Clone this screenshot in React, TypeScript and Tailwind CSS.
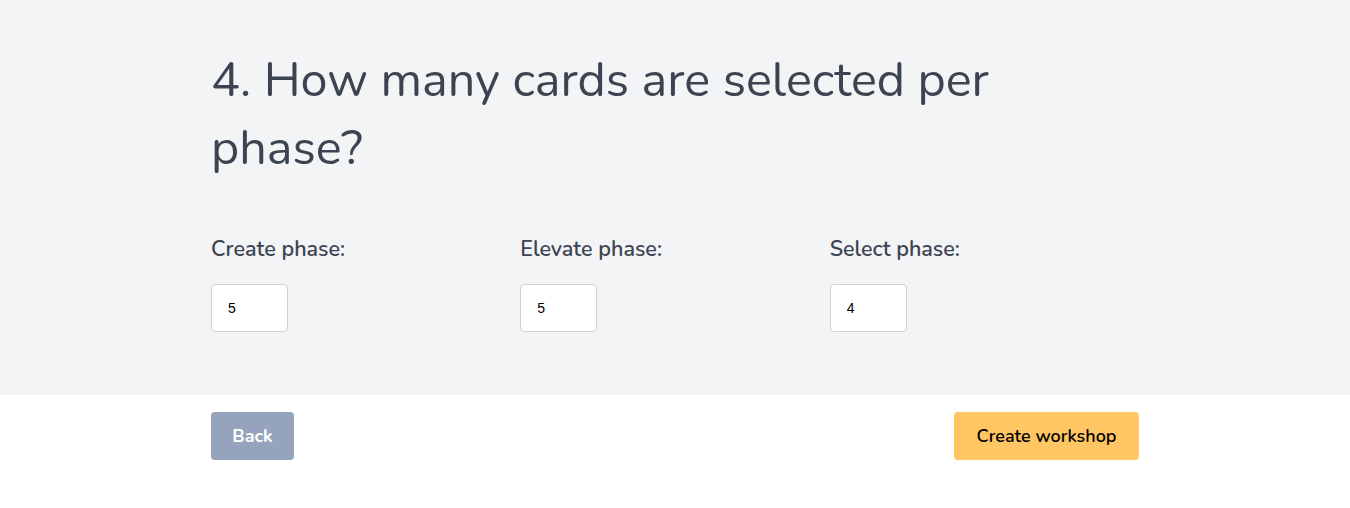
import * as React from "react";

const font = { fontFamily: "Nunito, Lato, 'Noto Sans', sans-serif" };

interface PhaseInputProps {
    label: string;
    value: string;
}

const PhaseInput = ({ label, value }: PhaseInputProps) => (
    <div className="flex flex-col">
        <label className="text-[21.5px] font-semibold leading-[24px] text-[#3d4451]">{label}</label>
        <input
            defaultValue={value}
            type="text"
            className="mt-[23px] h-[48px] w-[77px] rounded-[4px] border border-[#cfd1d6] bg-white pl-[16px] text-[14px] text-black outline-none"
            style={{ fontFamily: "Arial, 'Liberation Sans', sans-serif" }}
        />
    </div>
);

export default function App() {
    return (
        <div className="min-h-[508px] w-full bg-white" style={font}>
            <div className="bg-[#f3f4f6] pb-[63px] pt-[46px]">
                <div className="mx-auto w-[928px]">
                    <h1 className="text-[48.5px] font-normal leading-[68px] text-[#3d4451]">
                        4. How many cards are selected per phase?
                    </h1>
                    <div className="mt-[55px] grid grid-cols-3">
                        <PhaseInput label="Create phase:" value="5" />
                        <PhaseInput label="Elevate phase:" value="5" />
                        <PhaseInput label="Select phase:" value="4" />
                    </div>
                </div>
            </div>
            <div className="mx-auto flex w-[928px] items-center justify-between pt-[17px]">
                <button className="h-[48px] w-[83px] rounded-[4px] bg-[#95a4bc] text-[18px] font-bold text-white">
                    Back
                </button>
                <button className="h-[48px] w-[185px] rounded-[4px] bg-[#ffc663] text-[18px] font-semibold text-black">
                    Create workshop
                </button>
            </div>
        </div>
    );
}
